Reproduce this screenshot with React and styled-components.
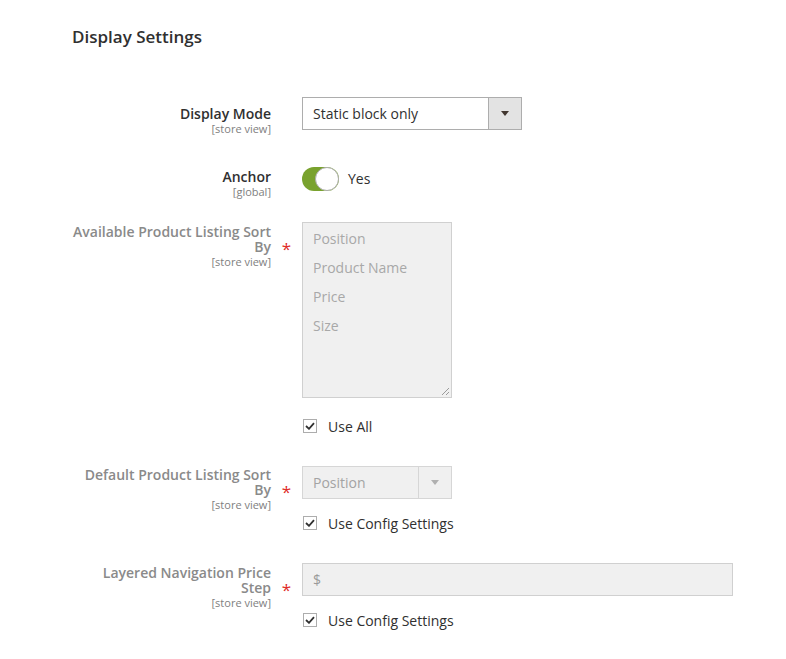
import React from 'react'
import styled, { createGlobalStyle } from 'styled-components'

const Global = createGlobalStyle`
    body {
        margin: 8px;
        background: #fff;
        font-family: "Open Sans", "Liberation Sans", sans-serif;
        color: #303030;
    }
`;

const Card = styled.div`
    width: 770px;
    box-sizing: border-box;
    background: #fff;
    box-shadow: 0 1px 8px 2px rgba(0, 0, 0, 0.14);
    padding: 17px 0 20px 0;
`;

const Title = styled.h2`
    margin: 0 0 49px 64px;
    font-size: 17px;
    line-height: 23px;
    font-weight: 600;
    color: #303030;
`;

const Row = styled.div`
    display: grid;
    grid-template-columns: 294px 1fr;
    margin-top: ${p => p.gap || 0}px;
`;

const LabelCell = styled.div`
    padding-top: ${p => p.pad || 0}px;
`;

const NameLine = styled.div`
    display: flex;
    align-items: flex-end;
`;

const Name = styled.span`
    width: 263px;
    box-sizing: border-box;
    padding-left: 64px;
    text-align: right;
    font-size: 14px;
    line-height: 15px;
    font-weight: 600;
    color: ${p => p.disabled ? '#8a8a8a' : '#303030'};
`;

const Star = styled.span`
    width: 31px;
    text-align: center;
    color: #e02b27;
    font-size: 17px;
    line-height: 15px;
    position: relative;
    top: 2px;
`;

const Scope = styled.div`
    width: 263px;
    margin-top: 1px;
    text-align: right;
    font-size: 11px;
    line-height: 14px;
    color: #808080;
`;

const Controls = styled.div`
    display: flex;
    flex-direction: column;
    align-items: flex-start;
`;

const SelectBox = styled.div`
    display: flex;
    width: ${p => p.w}px;
    height: 33px;
    box-sizing: border-box;
    border: 1px solid ${p => p.disabled ? '#d6d6d6' : '#adadad'};
    background: ${p => p.disabled ? '#f0f0f0' : '#fff'};
`;

const SelectText = styled.div`
    flex: 1;
    padding-left: 10px;
    font-size: 14px;
    line-height: 31px;
    color: ${p => p.disabled ? '#a3a3a3' : '#303030'};
`;

const SelectButton = styled.div`
    width: 32px;
    display: flex;
    align-items: center;
    justify-content: center;
    background: ${p => p.disabled ? '#f0f0f0' : '#e3e3e3'};
    border-left: 1px solid ${p => p.disabled ? '#d6d6d6' : '#adadad'};
    &::after {
        content: '';
        border-left: 4px solid transparent;
        border-right: 4px solid transparent;
        border-top: 5px solid ${p => p.disabled ? '#b0b0b0' : '#41362f'};
    }
`;

const ToggleWrap = styled.div`
    height: 33px;
    display: flex;
    align-items: center;
    gap: 9px;
    font-size: 14px;
    color: #303030;
`;

const Toggle = styled.div`
    width: 37px;
    height: 24px;
    border-radius: 12px;
    background: #79a22e;
    position: relative;
    &::after {
        content: '';
        position: absolute;
        right: 0;
        top: 0;
        width: 22px;
        height: 22px;
        border-radius: 50%;
        background: #fff;
        border: 1px solid #adadad;
    }
`;

const MultiSelect = styled.div`
    width: 150px;
    height: 176px;
    box-sizing: border-box;
    border: 1px solid #d0d0d0;
    background: #f0f0f0;
    padding: 1px 0 0 10px;
    position: relative;
`;

const Option = styled.div`
    font-size: 14px;
    line-height: 29px;
    color: #a8a8a8;
`;

const Grip = styled.svg`
    position: absolute;
    right: 1px;
    bottom: 1px;
`;

const TextInput = styled.div`
    width: 431px;
    height: 33px;
    box-sizing: border-box;
    border: 1px solid #d0d0d0;
    background: #f0f0f0;
    padding-left: 10px;
    font-size: 14px;
    line-height: 31px;
    color: #9a9a9a;
`;

const CheckRow = styled.label`
    display: flex;
    align-items: center;
    gap: 11px;
    height: 20px;
    margin-top: ${p => p.gap}px;
    padding-left: 1px;
    font-size: 14px;
    color: #303030;
`;

const Box = styled.span`
    width: 14px;
    height: 14px;
    box-sizing: border-box;
    border: 1px solid #adadad;
    background: #fff;
    display: flex;
    align-items: center;
    justify-content: center;
`;

const Check = ({ label, gap }) => (
    <CheckRow gap={gap}>
        <Box>
            <svg width="10" height="8" viewBox="0 0 10 8">
                <path d="M1 4 L4 6.8 L9 1.2" fill="none" stroke="#303030" strokeWidth="1.8" />
            </svg>
        </Box>
        {label}
    </CheckRow>
);

const Label = ({ name, scope, pad, required, disabled }) => (
    <LabelCell pad={pad}>
        <NameLine>
            <Name disabled={disabled}>{name}</Name>
            {required && <Star>*</Star>}
        </NameLine>
        <Scope>{scope}</Scope>
    </LabelCell>
);

export default function App() {
    return (
        <>
            <Global />
            <Card>
                <Title>Display Settings</Title>

                <Row>
                    <Label name="Display Mode" scope="[store view]" pad={9} />
                    <Controls>
                        <SelectBox w={220}>
                            <SelectText>Static block only</SelectText>
                            <SelectButton />
                        </SelectBox>
                    </Controls>
                </Row>

                <Row gap={26}>
                    <Label name="Anchor" scope="[global]" pad={7} />
                    <Controls>
                        <ToggleWrap>
                            <Toggle />
                            Yes
                        </ToggleWrap>
                    </Controls>
                </Row>

                <Row gap={23}>
                    <Label name="Available Product Listing Sort By" scope="[store view]" pad={2} required disabled />
                    <Controls>
                        <MultiSelect>
                            <Option>Position</Option>
                            <Option>Product Name</Option>
                            <Option>Price</Option>
                            <Option>Size</Option>
                            <Grip width="10" height="10" viewBox="0 0 10 10">
                                <path d="M9 2 L2 9 M9 6 L6 9" stroke="#9a9a9a" strokeWidth="1" />
                            </Grip>
                        </MultiSelect>
                        <Check label="Use All" gap={18} />
                    </Controls>
                </Row>

                <Row gap={30}>
                    <Label name="Default Product Listing Sort By" scope="[store view]" pad={1} required disabled />
                    <Controls>
                        <SelectBox w={150} disabled>
                            <SelectText disabled>Position</SelectText>
                            <SelectButton disabled />
                        </SelectBox>
                        <Check label="Use Config Settings" gap={14} />
                    </Controls>
                </Row>

                <Row gap={30}>
                    <Label name="Layered Navigation Price Step" scope="[store view]" pad={2} required disabled />
                    <Controls>
                        <TextInput>$</TextInput>
                        <Check label="Use Config Settings" gap={14} />
                    </Controls>
                </Row>
            </Card>
        </>
    )
}
